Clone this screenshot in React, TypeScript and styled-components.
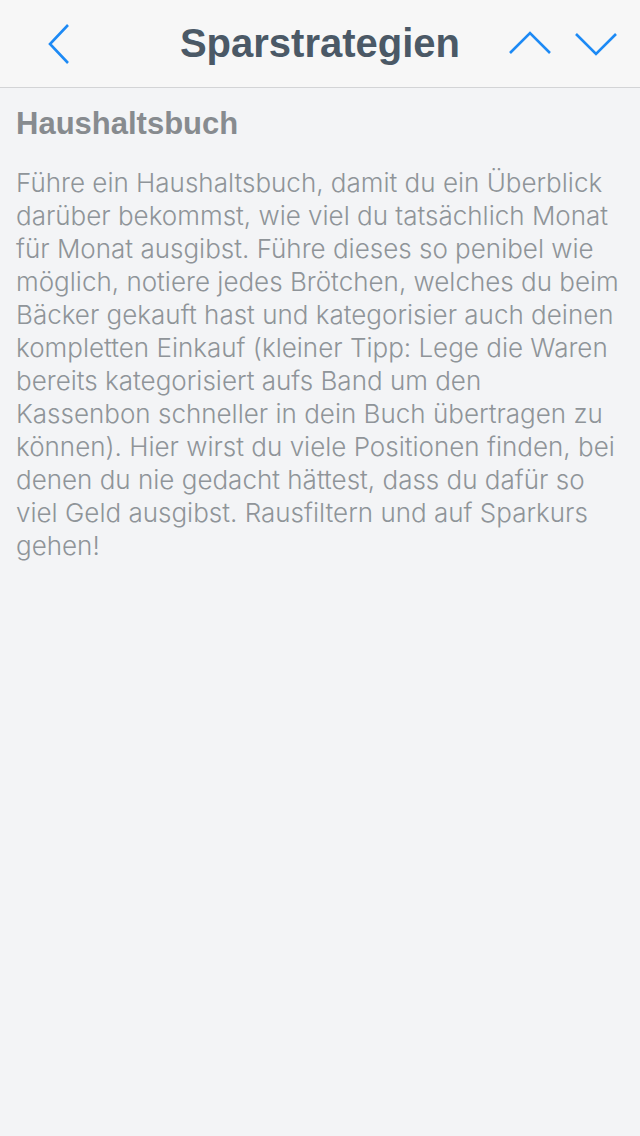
import React from "react";
import styled, { createGlobalStyle } from "styled-components";

const Global = createGlobalStyle`
  html, body { margin: 0; padding: 0; background: #f3f4f6; }
  #root { min-height: 1136px; }
`;

const Page = styled.div`
  min-height: 1136px;
  background: #f3f4f6;
  font-family: "Liberation Sans", Arial, sans-serif;
`;

const NavBar = styled.header`
  height: 87px;
  background: #f7f7f7;
  border-bottom: 1px solid #d3d4d6;
  display: grid;
  grid-template-columns: 120px 1fr 120px;
  align-items: center;
`;

const NavButton = styled.button`
  background: none;
  border: 0;
  padding: 0;
  display: flex;
  align-items: center;
  cursor: pointer;
`;

const Left = styled.div`
  display: flex;
  align-items: center;
  padding-left: 46px;
`;

const Right = styled.div`
  display: flex;
  align-items: center;
  justify-content: flex-end;
  gap: 22px;
  padding-right: 22px;
`;

const Title = styled.h1`
  margin: 0;
  text-align: center;
  font-size: 40px;
  font-weight: 700;
  color: #4b5966;
`;

const Body = styled.section`
  padding: 18px 16px 0 16px;
`;

const Heading = styled.h2`
  margin: 0;
  font-size: 31px;
  font-weight: 700;
  color: #878b8f;
  line-height: 36px;
`;

const Text = styled.p`
  margin: 24px 0 0 0;
  font-family: "Inter", "Liberation Sans", sans-serif;
  font-weight: 300;
  font-size: 26px;
  line-height: 33px;
  color: #8f9499;
`;

const Line = styled.span`
  display: block;
  white-space: nowrap;
`;

const Icon = ({ d, w, h }: { d: string; w: number; h: number }) => (
  <svg width={w} height={h} viewBox={`0 0 ${w} ${h}`} fill="none">
    <path d={d} stroke="#1d8af5" strokeWidth="2.6" strokeLinecap="butt" strokeLinejoin="miter" />
  </svg>
);

const lines = [
  "Führe ein Haushaltsbuch, damit du ein Überblick",
  "darüber bekommst, wie viel du tatsächlich Monat",
  "für Monat ausgibst. Führe dieses so penibel wie",
  "möglich, notiere jedes Brötchen, welches du beim",
  "Bäcker gekauft hast und kategorisier auch deinen",
  "kompletten Einkauf (kleiner Tipp: Lege die Waren",
  "bereits kategorisiert aufs Band um den",
  "Kassenbon schneller in dein Buch übertragen zu",
  "können). Hier wirst du viele Positionen finden, bei",
  "denen du nie gedacht hättest, dass du dafür so",
  "viel Geld ausgibst. Rausfiltern und auf Sparkurs",
  "gehen!",
];

export default function App() {
  return (
    <Page>
      <Global />
      <NavBar>
        <Left>
          <NavButton aria-label="Zurück">
            <Icon w={26} h={42} d="M22 2 L4 21 L22 40" />
          </NavButton>
        </Left>
        <Title>Sparstrategien</Title>
        <Right>
          <NavButton aria-label="Vorheriger">
            <Icon w={44} h={26} d="M2 22 L22 2 L42 22" />
          </NavButton>
          <NavButton aria-label="Nächster">
            <Icon w={44} h={26} d="M2 3 L22 23 L42 3" />
          </NavButton>
        </Right>
      </NavBar>
      <Body>
        <Heading>Haushaltsbuch</Heading>
        <Text>
          {lines.map((l, i) => (
            <Line key={i}>{l}</Line>
          ))}
        </Text>
      </Body>
    </Page>
  );
}
